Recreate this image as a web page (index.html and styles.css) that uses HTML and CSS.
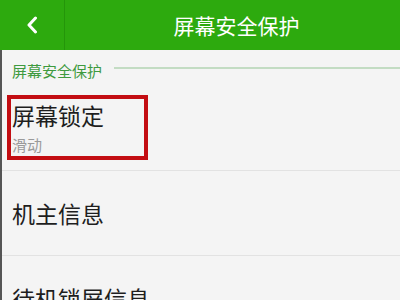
FILE: index.html
```html
<!DOCTYPE html>
<html lang="zh">
<head>
    <meta charset="UTF-8">
    <meta name="viewport" content="width=device-width, initial-scale=1.0">
    <title>屏幕安全保护</title>
    <link rel="stylesheet" href="styles.css">
</head>
<body>
    <div class="header">
        <div class="back">
            <svg width="12" height="18" viewBox="0 0 12 18">
                <path d="M9.5 2 L3 9 L9.5 16" fill="none" stroke="#fff" stroke-width="3" stroke-linecap="round" stroke-linejoin="round"/>
            </svg>
        </div>
        <div class="title">屏幕安全保护</div>
    </div>

    <div class="content">
        <div class="section">
            <span class="section-label">屏幕安全保护</span>
            <span class="section-line"></span>
        </div>

        <div class="item">
            <div class="item-title">屏幕锁定</div>
            <div class="item-sub">滑动</div>
            <!-- красная рамка поверх пункта -->
            <span class="mark"></span>
        </div>

        <div class="item">
            <div class="item-title">机主信息</div>
        </div>

        <div class="item">
            <div class="item-title">待机锁屏信息</div>
        </div>
    </div>
</body>
</html>
```

FILE: styles.css
```css
* {
    margin: 0px;
    padding: 0px;
    box-sizing: border-box;
}

body {
    width: 400px;
    height: 300px;
    overflow: hidden;
    background-color: #f4f4f4;
    font-family: "Noto Sans CJK SC", "Noto Sans", sans-serif;
}

.header {
    display: flex;
    height: 50px;
    background-color: #2daa0e;
    color: #fff;
}

.back {
    width: 65px;
    display: flex;
    align-items: center;
    justify-content: center;
    border-right: 1px solid #24960a;
}

.title {
    flex: 1;
    display: flex;
    align-items: center;
    justify-content: center;
    padding-left: 8px;
    font-size: 21px;
    line-height: 1;
}

.content {
    border-left: 2px solid #555;
    height: 250px;
}

/* Заголовок раздела */
.section {
    display: flex;
    align-items: center;
    height: 36px;
    padding-left: 10px;
}

.section-label {
    color: #3e9a3e;
    font-size: 15px;
    line-height: 1;
    margin-top: 4px;
}

.section-line {
    flex: 1;
    height: 2px;
    margin-left: 12px;
    background-color: #c3dcc3;
}

.item {
    position: relative;
    height: 85px;
    padding-left: 10px;
    display: flex;
    flex-direction: column;
    justify-content: center;
    border-bottom: 1px solid #e2e2e2;
}

.item-title {
    font-size: 23px;
    line-height: 1;
    color: #1e1e1e;
}

.item-sub {
    margin-top: 10px;
    font-size: 15px;
    line-height: 1;
    color: #9a9a9a;
}

.mark {
    position: absolute;
    left: 5px;
    top: 9px;
    width: 141px;
    height: 65px;
    border: 4px solid #c30d12;
}
```
